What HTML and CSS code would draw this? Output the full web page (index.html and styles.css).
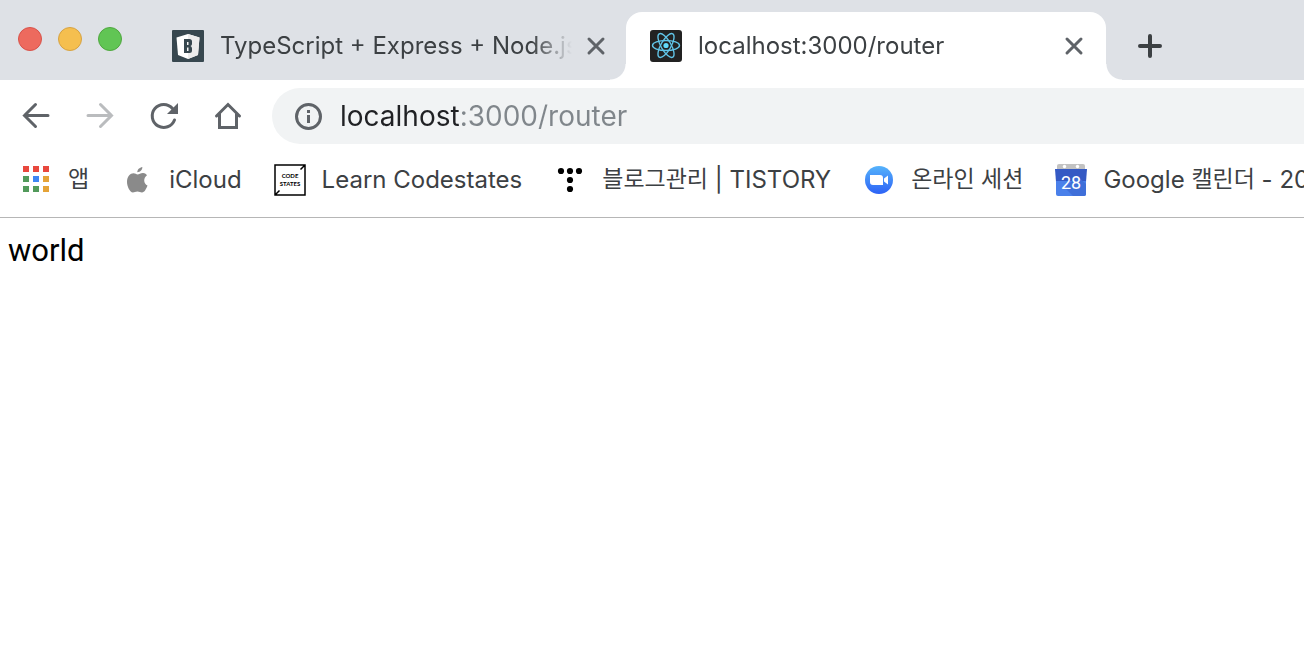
FILE: index.html
```
<!DOCTYPE html>
<html lang="ko">
<head>
<meta charset="utf-8">
<title>localhost:3000/router</title>
<link rel="stylesheet" href="styles.css">
</head>
<body>

<header class="browser">

  <div class="tabstrip">
    <div class="lights">
      <button class="light red" aria-label="Close window"></button>
      <button class="light yellow" aria-label="Minimize window"></button>
      <button class="light green" aria-label="Zoom window"></button>
    </div>

    <div class="tab">
      <button class="tab-title">
        <svg class="icon" viewBox="0 0 32 32">
          <rect width="32" height="32" rx="1" fill="#37474f"/>
          <path d="M16 4 27.500 7.500 26 25 16 29 6 25 4.500 7.500Z" fill="#fff"/>
          <path d="M16 4 27.500 7.500 26 25 16 29Z" fill="#ececec"/>
          <path d="M12 9h5.500q2.500 0 2.500 2.500v2.500q0 1.500-1.500 2 1.500.5 1.500 2.500v2q0 2.500-2.500 2.500H12Z" fill="#37474f"/>
          <path d="M15 12h1.500v3H15ZM15 17.500h1.500V21H15Z" fill="#f5f5f5"/>
        </svg>
        <span class="label">TypeScript + Express + Node.js</span>
      </button>
      <button class="close" aria-label="Close tab">
        <svg viewBox="0 0 24 24"><path d="M5 5 19 19M19 5 5 19"/></svg>
      </button>
    </div>

    <div class="tab active">
      <button class="tab-title">
        <svg class="icon" viewBox="0 0 32 32">
          <rect width="32" height="32" rx="3" fill="#222"/>
          <g fill="none" stroke="#61c5e8" stroke-width="1.400">
            <ellipse cx="16" cy="15.500" rx="13.500" ry="5"/>
            <ellipse cx="16" cy="15.500" rx="13.500" ry="5" transform="rotate(60 16 15.500)"/>
            <ellipse cx="16" cy="15.500" rx="13.500" ry="5" transform="rotate(120 16 15.500)"/>
          </g>
          <circle cx="16" cy="15.500" r="2.600" fill="#61dafb"/>
        </svg>
        <span class="label">localhost:3000/router</span>
      </button>
      <button class="close" aria-label="Close tab">
        <svg viewBox="0 0 24 24"><path d="M5 5 19 19M19 5 5 19"/></svg>
      </button>
    </div>

    <button class="newtab" aria-label="New tab">
      <svg viewBox="0 0 24 24"><path d="M12 2V22M2 12H22"/></svg>
    </button>
  </div>

  <div class="toolbar">
    <button class="nav" aria-label="Back">
      <svg viewBox="0 0 32 32"><path d="M28 15.500H4.500M15.500 4.500 4.500 15.500 15.500 26.500"/></svg>
    </button>
    <button class="nav" aria-label="Forward" disabled>
      <svg viewBox="0 0 32 32"><path d="M4 15.500H27.500M16.500 4.500 27.500 15.500 16.500 26.500"/></svg>
    </button>
    <button class="nav" aria-label="Reload">
      <svg viewBox="0 0 32 32">
        <path d="M26.500 20A11.500 11.500 0 1 1 24.500 8.500"/>
        <path class="solid" d="M30 3V14H19Z"/>
      </svg>
    </button>
    <button class="nav" aria-label="Home">
      <svg viewBox="0 0 32 32"><path d="M4.500 16 16 4.500 27.500 16M7.500 14V27.500H24.500V14"/></svg>
    </button>

    <div class="omnibox">
      <svg class="info" viewBox="0 0 28 28">
        <circle cx="14.500" cy="14.500" r="12"/>
        <path d="M14.500 13V21M14.500 8V11"/>
      </svg>
      <input class="address" type="text" value="localhost:3000/router" aria-label="Address" spellcheck="false">
    </div>
  </div>

  <nav class="bookmarks">
    <a href="#">
      <svg class="icon" viewBox="0 0 32 32">
        <path d="M3 2h6v6H3ZM13 2h6v6h-6ZM23 2h6v6h-6Z" fill="#e8483d"/>
        <path d="M3 12h6v6H3ZM3 22h6v6H3ZM13 22h6v6h-6Z" fill="#529a5b"/>
        <path d="M13 12h6v6h-6Z" fill="#3e86f3"/>
        <path d="M23 12h6v6h-6ZM23 22h6v6h-6Z" fill="#e5a337"/>
      </svg>
      <span><span class="korean">앱</span></span>
    </a>
    <a href="#">
      <svg class="icon" viewBox="0 0 32 32">
        <g fill="#8a8a8a">
          <path d="M16.500 10.500C18 10.500 19.500 9 22 9c2.200 0 3.200 1.200 4 2.300-4 2.700-3.500 8.500.5 10.200C25.300 24.700 23.500 28.500 21 28.500c-1.700 0-2.500-1-4.600-1s-2.900 1-4.500 1C9 28.500 6 22.500 6 18c0-5.500 3.300-8.700 6.500-8.700 1.700 0 3 1.200 4 1.200Z"/>
          <path d="M16.300 8.200c-.2-2.500 2.300-4.700 5-5.200.4 2.500-2.100 5.200-5 5.200Z"/>
        </g>
      </svg>
      <span>iCloud</span>
    </a>
    <a href="#">
      <svg class="icon" viewBox="0 0 32 32">
        <path d="M1 1h30v30H1ZM26.500 5.500 31 1M1 31 5.500 26.500" fill="#fff" stroke="#000" stroke-width="1.500"/>
        <text class="logo-text" x="16" y="14">CODE</text>
        <text class="logo-text" x="16" y="22">STATES</text>
      </svg>
      <span>Learn Codestates</span>
    </a>
    <a href="#">
      <svg class="icon" viewBox="0 0 32 32">
        <circle cx="7" cy="7" r="3.100"/>
        <circle cx="16" cy="7" r="3.100"/>
        <circle cx="25" cy="7" r="3.100"/>
        <circle cx="16" cy="16" r="3.100"/>
        <circle cx="16" cy="25" r="3.100"/>
      </svg>
      <span><span class="korean">블로그관리</span> | TISTORY</span>
    </a>
    <a href="#">
      <svg class="icon" viewBox="0 0 32 32">
        <linearGradient id="zoom" x2="0" y2="1">
          <stop offset="0" stop-color="#55b3fb"/>
          <stop offset="1" stop-color="#2d62f6"/>
        </linearGradient>
        <circle cx="16" cy="16" r="14" fill="url(#zoom)"/>
        <path d="M7 11h10q3 0 3 3v7H10q-3 0-3-3ZM21 14.500 25 11.500V20.500L21 17.500Z" fill="#fff"/>
      </svg>
      <span><span class="korean">온라인 세션</span></span>
    </a>
    <a href="#">
      <svg class="icon" viewBox="0 0 32 32">
        <path d="M2 6V2q0-2 2-2H28q2 0 2 2V6Z" fill="#c2c2c2"/>
        <circle cx="9.500" cy="2.500" r="1.700" fill="#fff"/>
        <circle cx="22.500" cy="2.500" r="1.700" fill="#fff"/>
        <path d="M0 5H32L31 18H1Z" fill="#3459c4"/>
        <path d="M1 17H31V30q0 2-2 2H3q-2 0-2-2Z" fill="#4a80ea"/>
        <path d="M22 12 31 20V30q0 2-2 2H18L10 24Z" fill="#3f6fd9"/>
        <text class="day" x="16" y="25">28</text>
      </svg>
      <span>Google <span class="korean">캘린더</span> - 20</span>
    </a>
  </nav>

</header>

<main class="page">world</main>

</body>
</html>
```
FILE: styles.css
```
* {
    box-sizing: border-box;
}

body {
    margin: 0;
    background: #fff;
    color: #3c4043;
    font-family: Inter, "Noto Sans CJK KR", sans-serif;
    font-size: 24px;
    overflow-x: hidden;
}

button {
    border: 0;
    padding: 0;
    background: none;
    color: inherit;
    font: inherit;
}

svg {
    display: block;
    flex: none;
}

.icon {
    width: 32px;
    height: 32px;
}

/* tabs */

.tabstrip {
    display: flex;
    height: 80px;
    padding: 12px 0 0 18px;
    background: #dee1e6;
}

.lights {
    display: flex;
    gap: 16px;
    padding-top: 15px;
    margin-right: 26px;
}

.light {
    width: 24px;
    height: 24px;
    border: 1px solid;
    border-radius: 50%;
}

.red {
    background: #ed6a5e;
    border-color: #d8524a;
}

.yellow {
    background: #f5bf4f;
    border-color: #d6a243;
}

.green {
    background: #61c554;
    border-color: #4fa73f;
}

.tab {
    position: relative;
    display: flex;
    flex: 0 1 478px;
    align-items: center;
    gap: 12px;
    min-width: 0;
    padding: 0 18px 0 24px;
}

.tab.active {
    flex-basis: 480px;
    padding-right: 20px;
    background: #fff;
    border-radius: 16px 16px 0 0;
}

/* curved feet of the selected tab */
.tab.active::before,
.tab.active::after {
    content: "";
    position: absolute;
    bottom: 0;
    width: 16px;
    height: 16px;
}

.tab.active::before {
    right: 100%;
    background: radial-gradient(circle at 0 0, #dee1e6 15px, #fff 16px);
}

.tab.active::after {
    left: 100%;
    background: radial-gradient(circle at 100% 0, #dee1e6 15px, #fff 16px);
}

.tab-title {
    display: flex;
    flex: 1;
    align-items: center;
    gap: 16px;
    min-width: 0;
    text-align: left;
}

.label {
    flex: 1;
    overflow: hidden;
    white-space: nowrap;
    line-height: 32px;
    -webkit-mask-image: linear-gradient(to left, transparent, #000 40px);
    mask-image: linear-gradient(to left, transparent, #000 40px);
}

.close svg,
.newtab svg {
    width: 24px;
    height: 24px;
    fill: none;
    stroke: #5f6368;
    stroke-width: 3;
    stroke-linecap: round;
}

.newtab {
    margin-left: 32px;
}

.newtab svg {
    stroke: #3c4043;
    stroke-width: 4;
}

/* toolbar */

.toolbar {
    display: flex;
    align-items: center;
    gap: 32px;
    height: 72px;
    padding-left: 20px;
}

.nav svg {
    width: 32px;
    height: 32px;
    fill: none;
    stroke: #5f6368;
    stroke-width: 3;
    stroke-linecap: round;
}

.nav:disabled svg {
    stroke: #babcbe;
}

.nav .solid {
    fill: #5f6368;
    stroke: none;
}

.omnibox {
    display: flex;
    flex: 1;
    align-items: center;
    gap: 18px;
    height: 56px;
    margin-left: -4px;
    padding-left: 22px;
    background: #f1f3f4;
    border-radius: 28px 0 0 28px;
}

.info {
    width: 28px;
    height: 28px;
    fill: none;
    stroke: #5f6368;
    stroke-width: 3;
}

/* the host is dark, port and path are grey */
.address {
    flex: 1;
    min-width: 0;
    height: 40px;
    border: 0;
    padding: 0;
    outline: 0;
    background: linear-gradient(to right, #202124 120px, #80868b 120px);
    -webkit-background-clip: text;
    background-clip: text;
    color: transparent;
    caret-color: #202124;
    font: inherit;
    font-size: 28px;
}

/* bookmarks */

.bookmarks {
    display: flex;
    gap: 32px;
    height: 66px;
    padding: 12px 0 0 20px;
    border-bottom: 1px solid #b6b6b6;
    overflow: hidden;
}

.bookmarks a {
    display: flex;
    flex: none;
    align-items: center;
    gap: 16px;
    height: 32px;
    color: inherit;
    line-height: 30px;
    text-decoration: none;
    white-space: nowrap;
}

/* hangul sits low next to the latin text */
.korean {
    font-family: "Noto Sans CJK KR", sans-serif;
    font-size: 23px;
    line-height: 1;
    vertical-align: 1px;
}

.logo-text {
    font: bold 6px Lato, sans-serif;
    text-anchor: middle;
}

.day {
    fill: #fff;
    font: 18px Roboto, sans-serif;
    text-anchor: middle;
}

.page {
    padding: 13px 8px;
    color: #000;
    font-family: Roboto, sans-serif;
    font-size: 31px;
    line-height: 40px;
}
```
